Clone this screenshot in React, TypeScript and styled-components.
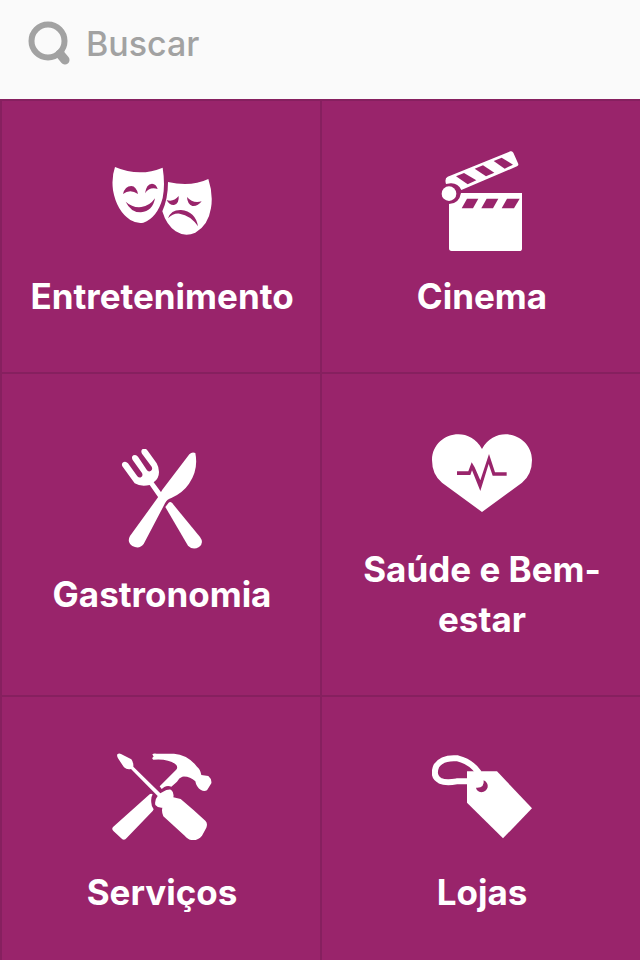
import React from "react";
import styled, { createGlobalStyle } from "styled-components";

const BRAND = "#99246b";

const GlobalStyle = createGlobalStyle`
  * { box-sizing: border-box; }
  body {
    margin: 0;
    background: #fafafa;
    font-family: Inter, "Open Sans", sans-serif;
  }
`;

const Page = styled.div`
  display: flex;
  flex-direction: column;
  height: 100vh;
  overflow-y: auto;
  scrollbar-width: none;
`;

const SearchBar = styled.label`
  display: flex;
  flex: none;
  align-items: center;
  gap: 16px;
  padding: 18px 28px 30px;
  background: #fafafa;
`;

const SearchIcon = styled.svg`
  flex: none;
  width: 42px;
  height: 45px;
`;

const SearchInput = styled.input`
  flex: 1;
  min-width: 0;
  height: 51px;
  padding: 0;
  border: 0;
  outline: 0;
  background: transparent;
  color: #777777;
  font: 500 34px/50px Inter, "Open Sans", sans-serif;
  &::placeholder {
    color: #a2a2a2;
    opacity: 1;
  }
`;

const Grid = styled.nav`
  display: grid;
  flex: 1 0 auto;
  grid-template-columns: 1fr 1fr;
  background: ${BRAND};
`;

const Tile = styled.a`
  display: flex;
  flex-direction: column;
  align-items: center;
  justify-content: center;
  gap: 20px;
  padding: 50px 24px 51px 26px;
  border-top: 2px solid #86205f;
  border-left: 2px solid #86205f;
  color: #ffffff;
  text-decoration: none;
`;

const TileIcon = styled.svg`
  flex: none;
  width: 100px;
  height: 100px;
  fill: #ffffff;
`;

const TileLabel = styled.span`
  font-size: 35px;
  font-weight: 700;
  line-height: 50px;
  text-align: center;
`;

const masks = (
  <>
    <path d="M45 51Q118 82 188 53Q196 105 188 144Q172 203 130 218Q112 222 91 210Q50 183 39 121Q34 82 45 51Z" />
    <path d="M204 96Q272 112 325 87Q340 132 333 174Q325 226 286 248Q255 262 227 244Q199 225 187 184Q204 146 204 96Z" />
    <g fill={BRAND}>
      <path d="M69 132Q75 108 94 108Q109 109 114 132Q90 115 69 132Z" />
      <path d="M135 130Q139 102 156 101Q169 102 173 117Q149 109 135 130Z" />
      <path d="M77 155Q98 174 124 171Q149 168 165 145Q158 184 123 187Q93 188 77 155Z" />
      <path d="M200 150Q220 157 236 138Q238 161 222 165Q208 166 200 150Z" />
      <path d="M261 141Q279 162 305 154Q293 170 277 168Q262 162 261 141Z" />
      <path d="M204 205Q213 179 243 180Q286 184 294 229Q272 196 239 191Q219 189 204 205Z" />
    </g>
  </>
);

const clapper = (
  <>
    <path d="M53 110L241 34Q247 32 250 38L265 72Q266 77 261 79L94 150Q84 129 62 130L48 132Q43 115 53 110Z" />
    <path d="M93 159H276V326Q276 333 268 333H65Q57 333 57 325V192Q87 192 93 159Z" />
    <circle cx="57" cy="161" r="22" />
    <g fill={BRAND}>
      <path d="M78 109L102 99L139 121L113 133Z" />
      <path d="M134 86L159 76L193 98L168 109Z" />
      <path d="M191 63L215 53L249 74L224 86Z" />
      <path d="M111 176H145L129 205H95Z" />
      <path d="M170 176H205L189 205H154Z" />
      <path d="M231 176H269L252 205H215Z" />
    </g>
  </>
);

const cutlery = (
  <>
    <path d="M37 79Q33 70 41 66Q48 63 54 70L82 109Q87 114 93 112Q100 108 96 99L68 60Q63 50 70 46Q78 42 84 50L110 89Q115 97 122 93Q129 89 125 80L96 41Q91 31 98 27Q107 23 113 32L140 70Q147 82 147 96Q147 116 131 127L166 174L153 184L119 135Q92 141 74 130Z" />
    <path d="M60 288L144 172L157 149L238 43Q246 34 256 39Q266 90 237 131Q220 157 184 174Q172 177 165 190L101 312Q88 329 67 318Q50 306 60 288Z" />
    <path d="M166 201L176 188Q181 183 187 190L270 291Q283 309 267 321Q249 332 234 317Z" />
  </>
);

const heart = (
  <>
    <path d="M186 276L66 188Q36 164 36 120C36 44 142 9 186 87C230 9 336 44 336 120Q336 164 306 188Z" />
    <path
      fill={BRAND}
      d="M111 154H145L155 127L164 142L181 181L207 102L225 157H260V167H218L206 132L181 213L156 151L151 165H111Z"
    />
  </>
);

const tools = (
  <>
    <path d="M52 43Q57 39 63 42L94 58Q101 67 100 80L181 160L192 154Q199 148 213 149Q223 157 220 172L242 177Q279 208 316 242Q324 250 319 263L306 287Q294 302 275 300Q264 299 254 287L190 229Q184 216 187 203Q173 204 166 195Q163 180 173 168L93 87Q81 90 72 82L54 55Q50 48 52 43Z" />
    <path d="M149 163Q153 160 158 163Q152 173 154 188Q154 199 161 208L158 213L80 294Q75 301 67 298L41 274Q33 267 40 260Z" />
    <path d="M157 43Q161 39 170 41H222Q263 44 291 80Q301 87 304 105L325 108Q336 117 334 130L321 151Q312 155 303 150Q289 142 286 124Q269 108 247 110Q237 113 231 125L214 140Q203 136 193 141L185 147L179 139L227 91Q235 84 229 75Q207 55 160 59Q153 54 161 50Z" />
  </>
);

const tag = (
  <>
    <path d="M141 94H231L336 205L249 295L141 188Z" />
    <path
      fill="none"
      stroke="#ffffff"
      strokeWidth="18"
      d="M177 99Q154 65 113 55Q66 51 49 78Q36 109 60 122Q77 130 110 124L145 124"
    />
    <path fill={BRAND} d="M191 121Q205 128 203 142Q199 156 184 157Q170 154 168 143Q194 145 191 121Z" />
  </>
);

const categories = [
  { label: "Entretenimento", viewBox: "36 3 300 300", drawing: masks },
  { label: "Cinema", viewBox: "6 33 300 300", drawing: clapper },
  { label: "Gastronomia", viewBox: "6 27 300 300", drawing: cutlery },
  { label: "Saúde e Bem-estar", viewBox: "36 12 300 300", drawing: heart },
  { label: "Serviços", viewBox: "36 21 300 300", drawing: tools },
  { label: "Lojas", viewBox: "36 21 300 300", drawing: tag },
];

export default function App() {
  return (
    <>
      <GlobalStyle />
      <Page>
        <SearchBar>
          <SearchIcon viewBox="0 0 42 45" fill="none" stroke="#a2a2a2" aria-hidden="true">
            <circle cx="20" cy="20" r="16.5" strokeWidth="6" />
            <path d="M32 33L37 39" strokeWidth="9" strokeLinecap="round" />
          </SearchIcon>
          <SearchInput type="search" placeholder="Buscar" aria-label="Buscar" />
        </SearchBar>
        <Grid>
          {categories.map(({ label, viewBox, drawing }) => (
            <Tile key={label} href="#">
              <TileIcon viewBox={viewBox} aria-hidden="true">
                {drawing}
              </TileIcon>
              <TileLabel>{label}</TileLabel>
            </Tile>
          ))}
        </Grid>
      </Page>
    </>
  );
}
